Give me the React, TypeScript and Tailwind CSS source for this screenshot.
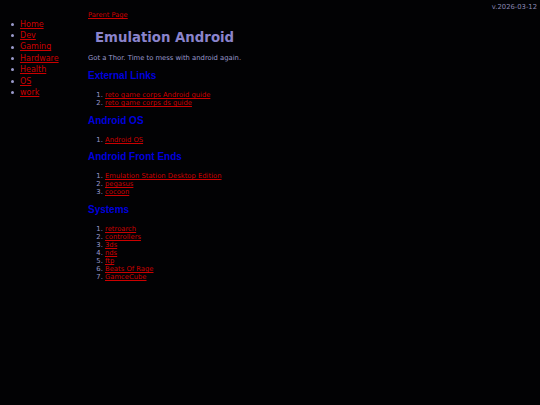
import React from "react";

const nav = ["Home", "Dev", "Gaming", "Hardware", "Health", "OS", "work"];

const sections: { title: string; items: string[] }[] = [
  { title: "External Links", items: ["reto game corps Android guide", "reto game corps ds guide"] },
  { title: "Android OS", items: ["Android OS"] },
  { title: "Android Front Ends", items: ["Emulation Station Desktop Edition", "pegasus", "cocoon"] },
  { title: "Systems", items: ["retroarch", "controllers", "3ds", "nds", "ftp", "Beats Of Rage", "GamceCube"] },
];

const gaps = ["mt-[8px]", "mt-[8px]", "mt-[7px]", "mt-[8px]"];

export default function App() {
  return (
    <div className="relative min-h-[405px] w-full bg-[#020204] font-['DejaVu_Sans',Verdana,sans-serif]">
      <div className="absolute right-[3px] top-[3px] text-[6.8px] leading-[8px] text-[#8a88b4]">v.2026-03-12</div>
      <div className="flex">
        <ul className="flex w-[88px] shrink-0 flex-col pl-[11px] pt-[18.5px] text-[8px] leading-[11.4px]">
          {nav.map((n) => (
            <li key={n} className="flex items-center">
              <span className="h-[3px] w-[3px] shrink-0 rounded-full bg-[#9a9acc]" />
              <a href="#" className="ml-[6px] text-[#cc0000] underline">{n}</a>
            </li>
          ))}
        </ul>
        <div className="flex flex-col pt-[11px]">
          <a href="#" className="text-[6.7px] leading-[8px] text-[#cc0000] underline">Parent Page</a>
          <h1 className="mt-[10.5px] pl-[7px] text-[13.3px] font-bold leading-[16px] text-[#8b84cc]">
            Emulation Android
          </h1>
          <p className="mt-[8.5px] text-[6.8px] leading-[8px] text-[#9999cc]">
            Got a Thor. Time to mess with android again.
          </p>
          {sections.map((s, i) => (
            <div key={s.title} className="flex flex-col">
              <h2 className={`${gaps[i]} font-['Liberation_Sans',Arial,sans-serif] text-[10px] font-bold leading-[12px] text-[#0000dd]`}>
                {s.title}
              </h2>
              <ol className="mt-[9px] list-decimal pl-[17px] text-[6.8px] leading-[8px] text-[#9999cc]">
                {s.items.map((it) => (
                  <li key={it}>
                    <a href="#" className="text-[#cc0000] underline">{it}</a>
                  </li>
                ))}
              </ol>
            </div>
          ))}
        </div>
      </div>
    </div>
  );
}
